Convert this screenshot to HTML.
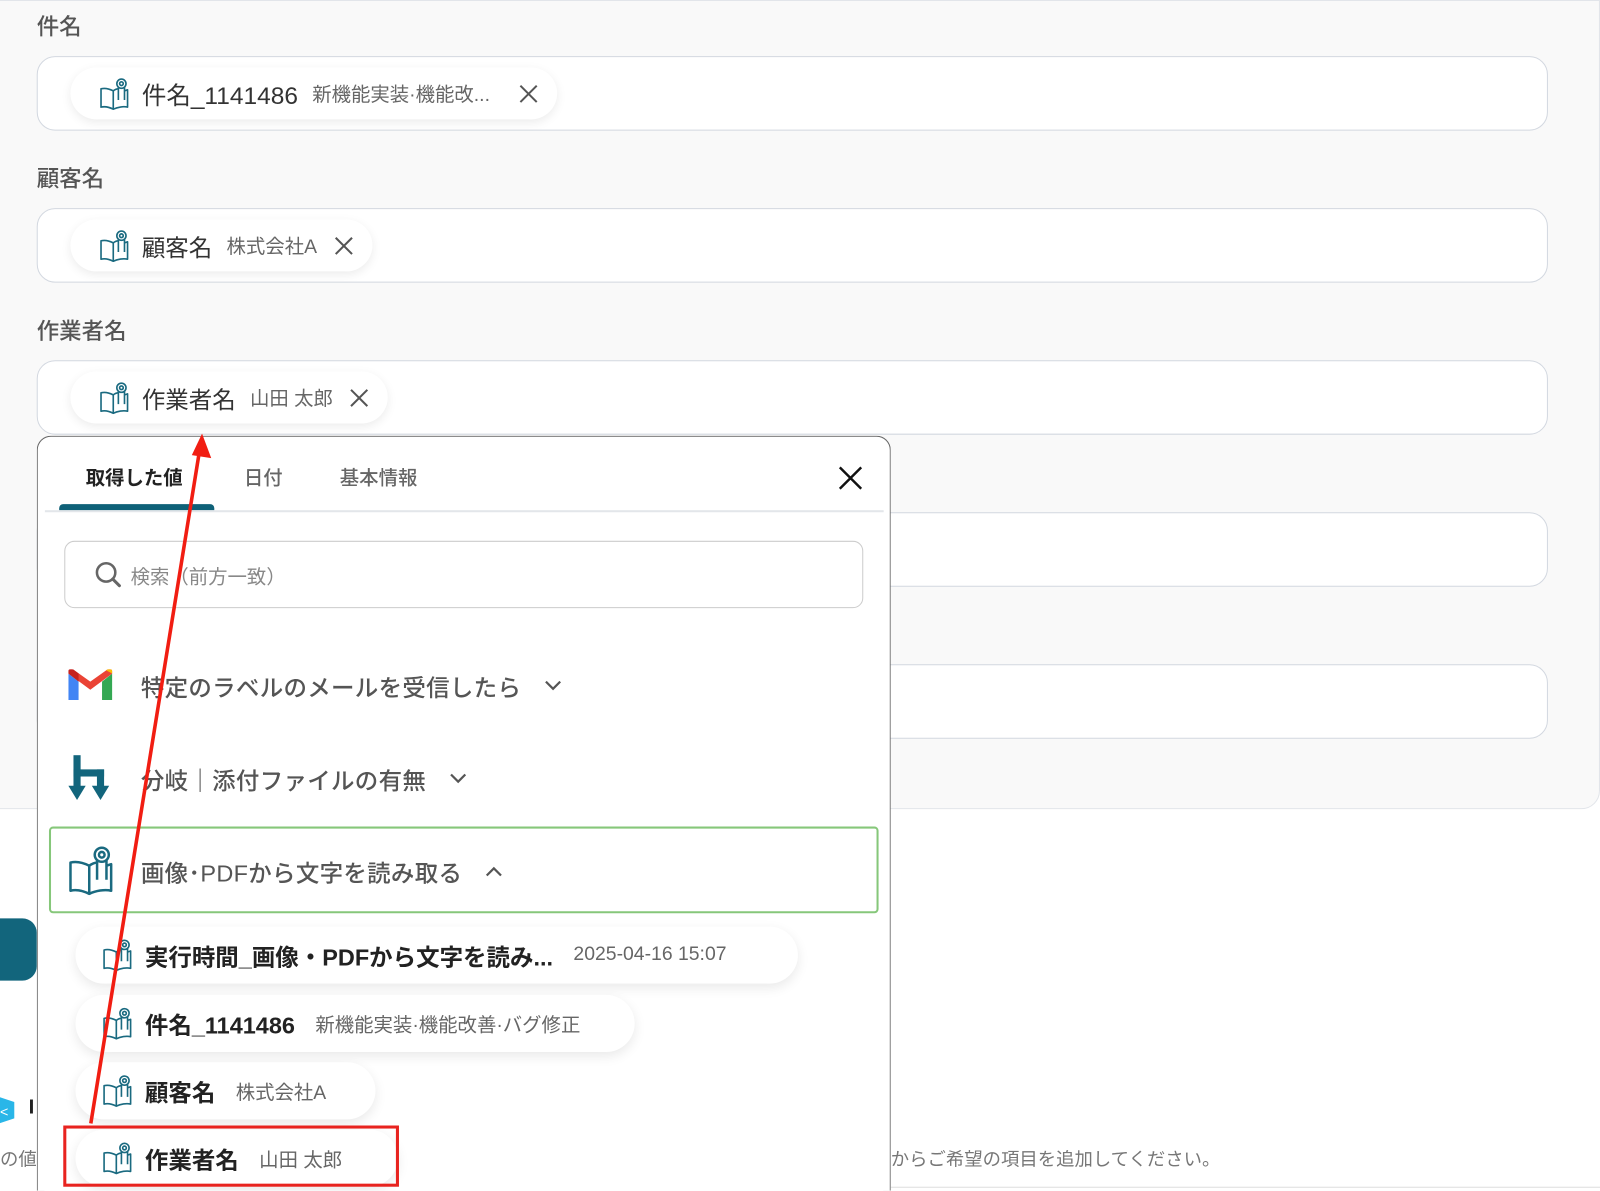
<!DOCTYPE html>
<html><head><meta charset="utf-8"><style>
*{box-sizing:border-box;margin:0;padding:0}
html,body{width:1600px;height:1191px;overflow:hidden;background:#fff}
body{font-family:"Liberation Sans","Noto Sans CJK JP",sans-serif;color:#333;position:relative}
#w{position:absolute;left:0;top:0;width:1568px;height:1167px;transform:scale(1.0204);transform-origin:0 0;overflow:hidden}
.a{position:absolute}
.panel{left:-20px;top:0;width:1588px;height:793px;background:#f9f9f9;border:1px solid #e2e5ea;border-radius:0 0 18px 0}
.lbl{font-size:22px;color:#555;font-weight:500}
.box{left:36px;width:1481px;height:73px;background:#fff;border:1.5px solid #d3d8e0;border-radius:18px}
.pill{background:#fff;border-radius:28px;box-shadow:0 3px 10px rgba(0,0,0,.08);display:flex;align-items:center;white-space:nowrap}
.pill .t{font-size:23px;color:#333;margin-left:12px}
.pill .v{font-size:19px;color:#666;margin-left:14px}
.x{margin-left:20px;display:block}
.dlg{left:36px;top:427px;width:837px;height:740px;background:#fff;border:1.5px solid #666;border-bottom:none;border-radius:14px 14px 0 0}
.tab{font-size:19px;color:#666;top:454px;font-weight:500}
.grp{font-size:23px;color:#555;display:flex;align-items:center;font-weight:500;letter-spacing:.3px}
.grp svg{margin-left:22px}
.ip{height:56px;box-shadow:0 4px 12px rgba(0,0,0,.09)}
.ip .t{font-size:23px;font-weight:700;color:#222}
.ip .v{font-size:19px;color:#666;margin-left:20px}
</style></head><body><div id="w">
<svg width="0" height="0" style="position:absolute"><defs>
<symbol id="bk" viewBox="0 0 30 32"><g fill="none" stroke="#1a6a80" stroke-width="1.6" stroke-linejoin="round"><path d="M2 11 C6 10 10 11 14 13 L14 31 C10 29 6 28 2 29 Z"/><path d="M14 13 C16 11.5 18 11 19 11 M25 13 L28 12 L28 29 C24 28 18 29 14 31"/><path d="M19 9 L19 22 M25 9 L25 22"/><ellipse cx="22" cy="6" rx="4.5" ry="4.5"/><circle cx="22" cy="6" r="1.8"/></g></symbol>
<symbol id="xx" viewBox="0 0 20 20"><path d="M2 2 L18 18 M18 2 L2 18" stroke="#555" stroke-width="2" fill="none"/></symbol>
</defs></svg>
<div class="a panel"></div>
<div class="a lbl" style="left:36px;top:9px">件名</div>
<div class="a box" style="top:55px"></div>
<div class="a pill" style="left:69px;top:66px;height:51px;padding:0 18px 0 28px"><svg width="30" height="32"><use href="#bk"/></svg><span class="t" style="font-size:24px">件名_1141486</span><span class="v">新機能実装·機能改...</span><svg class="x" width="20" height="20" style="margin-left:28px"><use href="#xx"/></svg></div>
<div class="a lbl" style="left:36px;top:158px">顧客名</div>
<div class="a box" style="top:204px"></div>
<div class="a pill" style="left:69px;top:215px;height:51px;padding:0 18px 0 28px"><svg width="30" height="32"><use href="#bk"/></svg><span class="t">顧客名</span><span class="v">株式会社A</span><svg class="x" width="20" height="20" style="margin-left:16px"><use href="#xx"/></svg></div>
<div class="a lbl" style="left:36px;top:307px">作業者名</div>
<div class="a box" style="top:353px"></div>
<div class="a pill" style="left:69px;top:364px;height:51px;padding:0 18px 0 28px"><svg width="30" height="32"><use href="#bk"/></svg><span class="t">作業者名</span><span class="v">山田 太郎</span><svg class="x" width="20" height="20" style="margin-left:16px"><use href="#xx"/></svg></div>
<div class="a box" style="top:502px"></div>
<div class="a box" style="top:651px"></div>
<div class="a" style="left:-20px;top:900px;width:56px;height:61px;background:#12657c;border-radius:14px"></div>
<svg class="a" style="left:-8px;top:1072px" width="26" height="32"><path d="M4 2 L22 8 L22 24 L4 30 Z" fill="#29b6e8"/><text x="8" y="22" fill="#fff" font-size="14" font-family="Liberation Sans">&lt;</text></svg>
<div class="a" style="left:28px;top:1074px;font-size:20px;font-weight:700;color:#222">I</div>
<div class="a" style="left:0;top:1122px;font-size:18px;color:#777">の値</div>
<div class="a" style="left:873px;top:1122px;font-size:18px;color:#777">からご希望の項目を追加してください。</div>
<div class="a" style="left:873px;top:1163px;width:695px;height:1px;background:#ddd"></div>

<div class="a dlg"></div>
<div class="a tab" style="left:84px;color:#222;font-weight:700">取得した値</div>
<div class="a tab" style="left:239px">日付</div>
<div class="a tab" style="left:333px">基本情報</div>
<svg class="a" style="left:821px;top:456px" width="25" height="25"><path d="M2 2 L23 23 M23 2 L2 23" stroke="#111" stroke-width="2.4"/></svg>
<div class="a" style="left:58px;top:494px;width:152px;height:6px;background:#0f6178;border-radius:4px 4px 0 0"></div>
<div class="a" style="left:44px;top:500px;width:822px;height:1.5px;background:#e3e6ea"></div>
<div class="a" style="left:63px;top:530px;width:783px;height:66px;border:1.5px solid #ccc;border-radius:10px"></div>
<svg class="a" style="left:92px;top:549px" width="28" height="28"><circle cx="12" cy="12" r="9" fill="none" stroke="#666" stroke-width="2.5"/><path d="M18.5 18.5 L25 25" stroke="#666" stroke-width="3" stroke-linecap="round"/></svg>
<div class="a" style="left:128px;top:551px;font-size:19px;color:#888">検索（前方一致）</div>

<svg class="a" style="left:67px;top:656px" width="43" height="32" viewBox="0 0 43 32"><path d="M0 4 L0 30 L10 30 L10 12 Z" fill="#4285f4"/><path d="M33 12 L33 30 L43 30 L43 4 Z" fill="#34a853"/><path d="M0 4 L21.5 20 L43 4 L43 2 C43 -1 39 -1 37 1 L21.5 12 L6 1 C4 -1 0 -1 0 2 Z" fill="#ea4335"/><path d="M37 1 L43 4 L43 2 C43 -1 39 -1 37 1Z" fill="#fbbc04"/><path d="M0 2 C0 -1 4 -1 6 1 L10 4 L10 12 L0 4Z" fill="#c5221f"/></svg>
<div class="a grp" style="left:138px;top:655px">特定のラベルのメールを受信したら<svg width="18" height="12"><path d="M2 2 L9 9 L16 2" stroke="#555" stroke-width="2.2" fill="none"/></svg></div>
<svg class="a" style="left:67px;top:740px" width="44" height="46"><g fill="#12657c"><rect x="5" y="0" width="7" height="34"/><rect x="5" y="14" width="30" height="7"/><rect x="28" y="14" width="7" height="20"/><path d="M0 30 L17 30 L8.5 44Z"/><path d="M23 30 L40 30 L31.5 44Z"/></g></svg>
<div class="a grp" style="left:138px;top:746px">分岐｜添付ファイルの有無<svg width="18" height="12"><path d="M2 2 L9 9 L16 2" stroke="#555" stroke-width="2.2" fill="none"/></svg></div>
<div class="a" style="left:48px;top:810px;width:813px;height:85px;border:2.5px solid #86c77a;border-radius:4px"></div>
<svg class="a" style="left:66px;top:828px" width="46" height="50" viewBox="0 0 30 32"><use href="#bk"/></svg>
<div class="a grp" style="left:138px;top:837px">画像･PDFから文字を読み取る<svg width="18" height="12"><path d="M2 10 L9 3 L16 10" stroke="#555" stroke-width="2.2" fill="none"/></svg></div>

<div class="a pill ip" style="left:74px;top:908px;width:708px;padding-left:26px"><svg width="30" height="32"><use href="#bk"/></svg><span class="t">実行時間_画像・PDFから文字を読み...</span><span class="v">2025-04-16 15:07</span></div>
<div class="a pill ip" style="left:74px;top:975px;width:548px;padding-left:26px"><svg width="30" height="32"><use href="#bk"/></svg><span class="t">件名_1141486</span><span class="v">新機能実装·機能改善·バグ修正</span></div>
<div class="a pill ip" style="left:74px;top:1041px;width:294px;padding-left:26px"><svg width="30" height="32"><use href="#bk"/></svg><span class="t">顧客名</span><span class="v">株式会社A</span></div>
<div class="a pill ip" style="left:74px;top:1107px;width:316px;padding-left:26px"><svg width="30" height="32"><use href="#bk"/></svg><span class="t">作業者名</span><span class="v">山田 太郎</span></div>
<div class="a" style="left:62px;top:1103px;width:329px;height:60px;border:3px solid #e8231f"></div>
<svg class="a" style="left:0;top:0" width="1568" height="1167"><line x1="89" y1="1101" x2="195" y2="445" stroke="#f11d12" stroke-width="3.5"/><path d="M198 425 L207 449 L188 446 Z" fill="#f11d12"/></svg>
</div></body></html>
